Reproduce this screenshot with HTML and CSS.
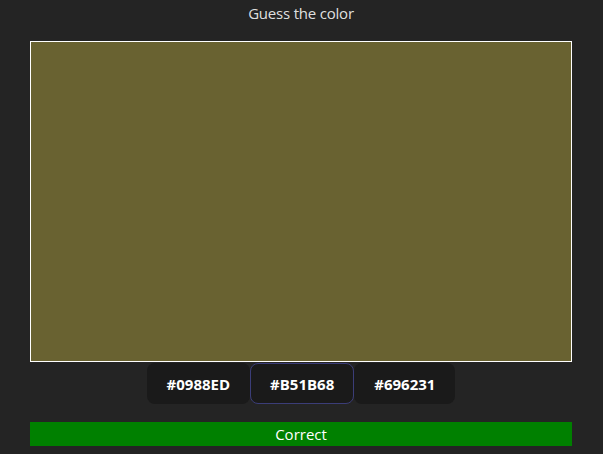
FILE: index.html
```html
<!DOCTYPE html>
<html lang="en">
<head>
<meta charset="utf-8">
<title>Guess the color</title>
<link rel="stylesheet" href="styles.css">
</head>
<body>
<div class="app">
  <div class="title">Guess the color</div>
  <div class="swatch" style="background:#696231"></div>
  <div class="options">
    <button class="opt">#0988ED</button>
    <button class="opt focused">#B51B68</button>
    <button class="opt">#696231</button>
  </div>
  <div class="result">Correct</div>
</div>
</body>
</html>
```
FILE: styles.css
```css
html, body {
  margin: 0;
  padding: 0;
}
body {
  background: #242424;
  color: rgba(255, 255, 255, 0.87);
  font-family: "Open Sans", "Noto Sans", sans-serif;
  font-size: 16px;
}
.app {
  padding: 0 31px 0 30px;
}
.title {
  text-align: center;
  font-size: 15px;
  line-height: 24px;
  margin-top: 1px;
  margin-bottom: 16px;
  letter-spacing: -0.2px;
}
.swatch {
  height: 321px;
  box-sizing: border-box;
  border: 1px solid #ffffff;
}
.options {
  display: flex;
  justify-content: center;
  margin-top: 1px;
}
.opt {
  height: 41px;
  padding: 0 19px;
  background: #1a1a1a;
  border: 1px solid transparent;
  border-radius: 8px;
  color: #ffffff;
  font-family: "Open Sans", "Noto Sans", sans-serif;
  font-size: 15px;
  font-weight: 700;
  letter-spacing: 0;
  cursor: pointer;
}
.opt.focused {
  border-color: #3b3d78;
}
.result {
  margin-top: 18px;
  height: 24px;
  line-height: 24px;
  background: #008000;
  color: #ffffff;
  text-align: center;
  font-size: 15px;
}
```
